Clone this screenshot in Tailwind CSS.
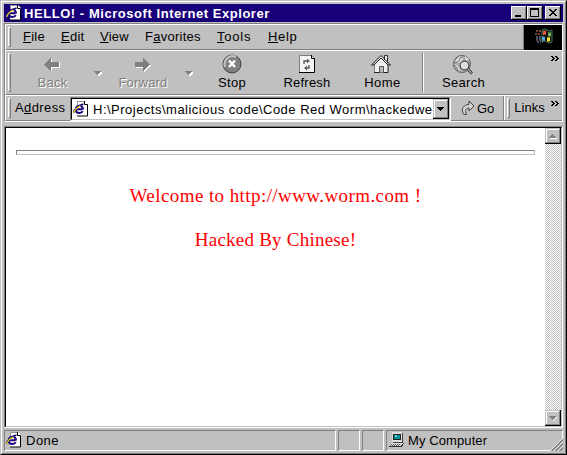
<!DOCTYPE html>
<html lang="en">
<head>
<meta charset="utf-8">
<title>HELLO! - Microsoft Internet Explorer</title>
<script src="https://cdn.jsdelivr.net/npm/@tailwindcss/browser@4"></script>
</head>
<body class="bg-[#c0c0c0] overflow-hidden">
<svg class="hidden">
  <symbol id="ie" viewBox="0 0 16 16">
    <path d="M4 0h8l3 3v12H4z" fill="#fff"/>
    <path d="M4.500 4V.5H12" fill="none" stroke="#909090"/>
    <path d="M11.500 0v3.500h3V15H4" fill="none" stroke="#000" stroke-width="1"/>
    <path d="M9.500 8.200H3.500M10 8.500C9.800 5.800 8.600 4.800 6.600 4.800C4.300 4.800 2.800 6.300 2.800 8.500C2.800 10.700 4.300 12 6.300 12C8 12 9 11.500 9.800 10.300" fill="none" stroke="#18007b" stroke-width="2"/>
    <path d="M.8 12C0 9 5 4.500 10.500 3" fill="none" stroke="#18007b" stroke-width="1.500"/>
    <path d="M.7 12C1.300 9 4 6.500 7.500 4.800" fill="none" stroke="#e0d020" stroke-width="1.300"/>
  </symbol>
</svg>
<div class="w-[567px] h-[455px] border border-t-[#c0c0c0] border-l-[#c0c0c0] border-r-black border-b-black font-['Liberation_Sans',sans-serif] text-[13px] leading-[16px] text-black whitespace-nowrap">
<div class="h-full border border-t-white border-l-white border-r-[#808080] border-b-[#808080] p-[2px] bg-[#c0c0c0] flex flex-col">

  <!-- Title bar -->
  <div class="h-[18px] shrink-0 bg-[#18007b] flex items-center pl-[2px] pr-[2px] text-white font-bold">
    <svg class="w-4 h-4 shrink-0"><use href="#ie"/></svg>
    <span class="ml-[2px] mt-[2px] tracking-[0.55px]">HELLO! - Microsoft Internet Explorer</span>
    <div class="ml-auto flex">
      <svg class="w-4 h-[14px]" viewBox="0 0 16 14" shape-rendering="crispEdges"><path fill="#000" d="M0 0h16v14H0z"/><path fill="#fff" d="M0 0h15v13H0z"/><path fill="#808080" d="M1 1h14v12H1z"/><path fill="#c0c0c0" d="M1 1h13v11H1z"/><path d="M4 9h6v2H4z"/></svg>
      <svg class="w-4 h-[14px]" viewBox="0 0 16 14" shape-rendering="crispEdges"><path fill="#000" d="M0 0h16v14H0z"/><path fill="#fff" d="M0 0h15v13H0z"/><path fill="#808080" d="M1 1h14v12H1z"/><path fill="#c0c0c0" d="M1 1h13v11H1z"/><path fill-rule="evenodd" d="M3 2h9v9H3zM4 4v6h7V4z"/></svg>
      <svg class="w-4 h-[14px] ml-[2px]" viewBox="0 0 16 14" shape-rendering="crispEdges"><path fill="#000" d="M0 0h16v14H0z"/><path fill="#fff" d="M0 0h15v13H0z"/><path fill="#808080" d="M1 1h14v12H1z"/><path fill="#c0c0c0" d="M1 1h13v11H1z"/><path d="M4 3h2v1h1v1h2V4h1V3h2v1h-1v1h-1v1H9v1h1v1h1v1h1v1h-2V9H9V8H7v1H6v1H4V9h1V8h1V7h1V6H6V5H5V4H4z"/></svg>
    </div>
  </div>

  <!-- Toolbars -->
  <div class="mt-px h-[99px] shrink-0 border border-t-[#808080] border-l-[#808080] border-r-white border-b-white">
    <div class="h-[26px] border-t border-t-white border-b border-b-[#808080] border-l border-l-white flex">
      <div class="w-[3px] h-[20px] mt-[2px] ml-[2px] border border-t-white border-l-white border-r-[#808080] border-b-[#808080]"></div>
      <div class="flex mt-[4px] ml-[12px] tracking-[0.25px]">
        <span class="w-[38px]"><u>F</u>ile</span><span class="w-[39px]"><u>E</u>dit</span><span class="w-[45px]"><u>V</u>iew</span><span class="w-[72px]">F<u>a</u>vorites</span><span class="w-[51px] tracking-[0.8px]"><u>T</u>ools</span><span class="tracking-[0.7px]"><u>H</u>elp</span>
      </div>
      <div class="ml-auto w-[39px] border-l border-l-[#808080] flex">
        <svg class="w-[38px] h-[25px]" viewBox="0 0 38 25"><path d="M0 0h38v25H0z" fill="#000"/>
          <path d="M12 6h6M11 9h6M12 12h5M12 15h5" stroke="#754236" stroke-width="2" stroke-dasharray="2 1"/><path d="M12 13h5M13 17h4" stroke="#285b80" stroke-width="2" stroke-dasharray="2 1"/>
          <path d="M18 5q3-2 5 0t5 0v12q-3 2-5 0t-5 0z" fill="#151510" stroke="#45765d"/>
          <path d="M19 6q2-1 3 0v4q-1-1-3 0z" fill="#e85a38"/><path d="M24 7q1 1 3 0v4q-2 1-3 0z" fill="#70ad58"/><path d="M18 12q2-1 3 0v4q-1-1-3 0z" fill="#5aa5e0"/><path d="M23 12q2 1 3 0v4q-2 1-3 0z" fill="#ffe52c"/></svg>
      </div>
    </div>

    <div class="h-[45px] border-t border-t-white border-b border-b-[#808080] border-l border-l-white flex">
      <div class="w-[3px] h-[39px] mt-[2px] ml-[2px] border border-t-white border-l-white border-r-[#808080] border-b-[#808080]"></div>
      <div class="w-[83px] flex flex-col items-center text-[#808080] [text-shadow:1px_1px_0_#fff]">
        <svg class="w-[18px] h-[16px] mt-[6px] -ml-[2px]" viewBox="0 0 18 16" shape-rendering="crispEdges"><path fill="#fff" d="M2 8l7-7v4h8v6H9v4z"/><path fill="#808080" d="M1 7.500l7-7V5h8v5H8v4.500z"/></svg>
        <span class="mt-[2px] tracking-[0.3px]">Back</span>
      </div>
      <svg class="w-[10px] h-[6px] mt-[20px] -ml-px" viewBox="0 0 10 6" shape-rendering="crispEdges"><path fill="#fff" d="M2 1h7v1L6 5H5z"/><path fill="#808080" d="M0 0h8L4 4z"/></svg>
      <div class="w-[80px] flex flex-col items-center text-[#808080] [text-shadow:1px_1px_0_#fff]">
        <svg class="w-[18px] h-[16px] mt-[6px]" viewBox="0 0 18 16" shape-rendering="crispEdges"><path fill="#fff" d="M17 8.500l-7 7V11H2V6h8V1.500z"/><path fill="#808080" d="M16 7.500l-7-7V5H1v5h8v4.500z"/></svg>
        <span class="mt-[2px] tracking-[0.2px]">Forward</span>
      </div>
      <svg class="w-[10px] h-[6px] mt-[20px] ml-px" viewBox="0 0 10 6" shape-rendering="crispEdges"><path fill="#fff" d="M2 1h7v1L6 5H5z"/><path fill="#808080" d="M0 0h8L4 4z"/></svg>
      <div class="w-[75px] flex flex-col items-center">
        <svg class="w-5 h-5 mt-[3px]" viewBox="0 0 20 20"><circle cx="10" cy="10" r="9" fill="#808080" stroke="#404040"/><path d="M3 13A8 8 0 0 1 14 3" fill="none" stroke="#c5c5c5" stroke-width="2"/><path d="M7 6.500l6 6.500M13 6.500l-6 6.500" stroke="#fff" stroke-width="2.400"/></svg>
        <span class="mt-[1px] ml-px tracking-[0.3px]">Stop</span>
      </div>
      <div class="w-[75px] flex flex-col items-center">
        <svg class="w-5 h-5 mt-[3px]" viewBox="0 0 20 20"><path d="M2.500 1.500h12l3 3v14h-15z" fill="#f5f5f5" stroke="#808080"/><path d="M14.500 1v3.500h3v14H2" fill="none" stroke="#000"/><path d="M7 10V7h4M8 14h4v-3" fill="none" stroke="#505050" stroke-width="1.300"/><path d="M10 4.500l3 2.500-3 2.500zM10 11.500l-3 2.500 3 2.500z" fill="#606060"/></svg>
        <span class="mt-[1px] ml-px tracking-[0.2px]">Refresh</span>
      </div>
      <div class="w-[75px] flex flex-col items-center">
        <svg class="w-[22px] h-5 mt-[3px] -ml-px" viewBox="0 0 22 20"><path d="M14.500 6V1.500h3V9" fill="#eee" stroke="#303030"/><path d="M4 10v9h14v-9l-7-8z" fill="#eee"/><path d="M4.500 10v8.500" stroke="#808080"/><path d="M1.500 11L11 1.500 20.500 11H18M1.500 11H4L11 4l7 7v7.500H4" fill="none" stroke="#202020"/><path d="M9.500 18.500v-6h4v6" fill="#bbb" stroke="#555"/></svg>
        <span class="mt-[1px] ml-[2px] tracking-[0.5px]">Home</span>
      </div>
      <div class="w-[2px] ml-[3px] h-[39px] mt-[2px] bg-[#808080] border-r border-r-white"></div>
      <div class="w-[78px] flex flex-col items-center">
        <svg class="w-[22px] h-[21px] mt-[3px]" viewBox="0 0 22 21"><circle cx="10" cy="10" r="8.500" fill="#aaa" stroke="#606060"/><path d="M3 7l5-5 3 3-2 3-4 1zM13 2l4 3-3 2zM2 10l4 2 2 5-3-1z" fill="#e5e5e5"/><path d="M3 9q5-1 6-6m-7 8q3 1 4 6" stroke="#666" fill="none"/><circle cx="12.500" cy="11.500" r="4.300" fill="#e0e0e0" stroke="#505050" stroke-width="1.200"/><path d="M15.500 14.500l4.500 5" stroke="#404040" stroke-width="2.800"/><path d="M15.500 14.500l4 4.500" stroke="#ddd"/></svg>
        <span class="ml-px tracking-[0.3px]">Search</span>
      </div>
      <svg class="w-2 h-[5px] ml-auto mr-[3px] mt-[5px]" viewBox="0 0 8 5" shape-rendering="crispEdges"><path d="M0 0h2v1h1v1h1v1H3v1H2v1H0V4h1V3h1V2H1V1H0zM4 0h2v1h1v1h1v1H7v1H6v1H4V4h1V3h1V2H5V1H4z"/></svg>
    </div>

    <div class="h-[26px] border-t border-t-white border-b border-b-[#808080] border-l border-l-white flex">
      <div class="w-[3px] h-[20px] mt-[2px] ml-[2px] border border-t-white border-l-white border-r-[#808080] border-b-[#808080]"></div>
      <span class="w-[55px] mt-[4px] ml-[4px] tracking-[0.4px]">A<u>d</u>dress</span>
      <div class="w-[381px] h-[24px] mt-px border border-t-[#808080] border-l-[#808080] border-r-white border-b-white">
        <div class="h-[22px] border border-t-black border-l-black border-r-[#c0c0c0] border-b-[#c0c0c0] bg-white flex overflow-hidden">
          <svg class="w-4 h-4 ml-px mt-[2px] shrink-0"><use href="#ie"/></svg>
          <span class="ml-[4px] mt-[3px] w-[341px] tracking-[0.49px]">H:\Projects\malicious code\Code Red Worm\hackedwe</span>
          <svg class="w-4 h-5 shrink-0" viewBox="0 0 16 20" shape-rendering="crispEdges"><path fill="#000" d="M0 0h16v20H0z"/><path fill="#c0c0c0" d="M0 0h15v19H0z"/><path fill="#808080" d="M1 1h14v18H1z"/><path fill="#fff" d="M1 1h13v17H1z"/><path fill="#c0c0c0" d="M2 2h12v16H2z"/><path d="M4 8h7v1h-1v1H9v1H8v1H7v-1H6v-1H5V9H4z"/></svg>
        </div>
      </div>
      <svg class="w-[15px] h-4 ml-[10px] mt-[4px]" viewBox="0 0 15 16"><path d="M3 14.500C-1 9 3 4.500 8 4.500V1l5 5-5 5V8C5 8 3.500 10 5.500 14.500z" fill="#d5d5d5" stroke="#404040"/></svg>
      <span class="ml-px mt-[5px]">Go</span>
      <div class="w-[2px] h-[24px] ml-[9px] bg-[#808080] border-r border-r-white"></div>
      <div class="w-[3px] h-[20px] mt-[2px] ml-[2px] border border-t-white border-l-white border-r-[#808080] border-b-[#808080]"></div>
      <span class="ml-[4px] mt-[4px]">Links</span>
      <svg class="w-2 h-[5px] ml-auto mr-[3px] mt-[5px]" viewBox="0 0 8 5" shape-rendering="crispEdges"><path d="M0 0h2v1h1v1h1v1H3v1H2v1H0V4h1V3h1V2H1V1H0zM4 0h2v1h1v1h1v1H7v1H6v1H4V4h1V3h1V2H5V1H4z"/></svg>
    </div>
  </div>

  <!-- Document -->
  <div class="mt-[4px] h-[302px] shrink-0 border border-t-[#808080] border-l-[#808080] border-r-white border-b-white">
    <div class="h-full border border-t-black border-l-black border-r-[#c0c0c0] border-b-[#c0c0c0] bg-white flex">
      <div class="w-[539px] px-[10px] pt-[22px] text-center text-[#ff0000] font-['Liberation_Serif',serif] text-[19px] leading-[22px]">
        <div class="w-[519px] h-[5px] border border-t-[#808080] border-l-[#808080] border-r-[#c0c0c0] border-b-[#c0c0c0]"></div>
        <p class="mt-[30px] tracking-[0.42px]">Welcome to http://www.worm.com !</p>
        <p class="mt-[22px] tracking-[0.23px]">Hacked By Chinese!</p>
      </div>
      <div class="flex-1 flex flex-col justify-between bg-[repeating-conic-gradient(#c0c0c0_0_25%,#fff_0_50%)] bg-[length:2px_2px]">
        <svg class="w-4 h-4" viewBox="0 0 16 16" shape-rendering="crispEdges"><path d="M0 0h16v16H0z"/><path fill="#c0c0c0" d="M0 0h15v15H0z"/><path fill="#808080" d="M1 1h14v14H1z"/><path fill="#fff" d="M1 1h13v13H1z"/><path fill="#c0c0c0" d="M2 2h12v12H2z"/><path fill="#fff" d="M5 10h7v1H5z"/><path fill="#808080" d="M7 6h1v1h1v1h1v1h1v1H4V9h1V8h1V7h1z"/></svg>
        <svg class="w-4 h-4" viewBox="0 0 16 16" shape-rendering="crispEdges"><path d="M0 0h16v16H0z"/><path fill="#c0c0c0" d="M0 0h15v15H0z"/><path fill="#808080" d="M1 1h14v14H1z"/><path fill="#fff" d="M1 1h13v13H1z"/><path fill="#c0c0c0" d="M2 2h12v12H2z"/><path fill="#fff" d="M12 7v1h-1v1h-1v1H9v1H8v-1l3-3z"/><path fill="#808080" d="M4 6h7v1h-1v1H9v1H8v1H7V9H6V8H5V7H4z"/></svg>
      </div>
    </div>
  </div>

  <!-- Status bar -->
  <div class="mt-[2px] h-[21px] shrink-0 flex gap-[2px]">
    <div class="w-[332px] border border-t-[#808080] border-l-[#808080] border-r-white border-b-white flex">
      <svg class="w-4 h-4 ml-px mt-[1px]"><use href="#ie"/></svg><span class="ml-[4px] mt-[2px] tracking-[0.5px]">Done</span>
    </div>
    <div class="w-[22px] border border-t-[#808080] border-l-[#808080] border-r-white border-b-white"></div>
    <div class="w-[22px] border border-t-[#808080] border-l-[#808080] border-r-white border-b-white"></div>
    <div class="flex-1 border border-t-[#808080] border-l-[#808080] border-r-white border-b-white flex">
      <svg class="w-4 h-4 ml-[2px] mt-[1px]" viewBox="0 0 16 16" shape-rendering="crispEdges"><path fill="#444" d="M4 1h10v10H4z"/><path fill="#ddd" d="M3 0h10v10H3z"/><path fill="#222" d="M4 2h8v6H4z"/><path fill="#008e95" d="M5 3h6v4H5z"/><path fill="#68cdd0" d="M6 3h2v2H6z"/><path fill="#333" d="M2 11h13l-2 4H0z"/><path fill="#ddd" d="M2 11h12l-2 3H0z"/><path stroke="#555" stroke-dasharray="1 1" d="M2 12.500h10M1 13.500h10"/></svg>
      <span class="ml-[3px] mt-[2px] tracking-[0.1px]">My Computer</span>
      <svg class="w-[13px] h-[13px] ml-auto mt-[7px] -mr-px" viewBox="0 0 13 13"><path d="M0 0h13v13H0z" fill="#c0c0c0"/><path d="M0 13L13 0M4 13l9-9M8 13l5-5" stroke="#fff"/><path d="M1.500 13L13 1.500M5.500 13L13 5.500M9.500 13L13 9.500" stroke="#808080" stroke-width="1.600"/></svg>
    </div>
  </div>
</div>
</div>
</body>
</html>
